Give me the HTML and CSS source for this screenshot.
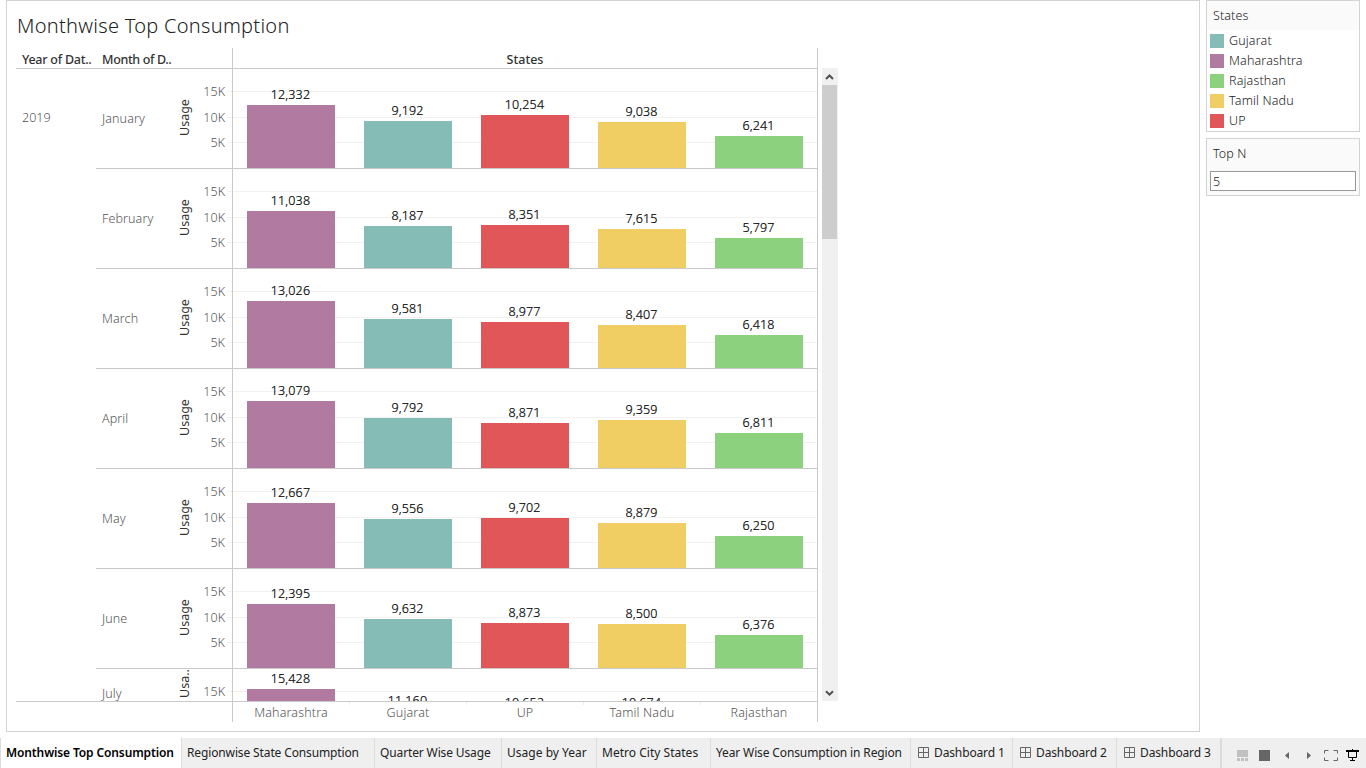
FILE: index.html
```html
<!DOCTYPE html>
<html lang="en">
<head>
<meta charset="utf-8">
<title>Monthwise Top Consumption</title>
<link rel="stylesheet" href="styles.css">
</head>
<body>
<main class="workspace">
  <section class="viz">
    <h1 class="viz-title">Monthwise Top Consumption</h1>
    <div class="viz-body">
      <div class="table">
        <div class="head">
          <div class="head-year">Year of Dat..</div>
          <div class="head-month">Month of D..</div>
          <div class="head-states">States</div>
        </div>
        <div class="body">
          <div class="year">2019</div>
          <div class="rows" id="rows"></div>
        </div>
        <div class="foot">
          <div class="foot-pad"></div>
          <div class="cats">
            <span>Maharashtra</span><span>Gujarat</span><span>UP</span><span>Tamil Nadu</span><span>Rajasthan</span>
          </div>
        </div>
      </div>
      <div class="scrollbar">
        <svg class="arrow" width="16" height="16" viewBox="0 0 16 16"><path d="M4 11 7.500 7.500 11 11" fill="none" stroke="#505050" stroke-width="2"/></svg>
        <div class="thumb"></div>
        <svg class="arrow" width="16" height="16" viewBox="0 0 16 16"><path d="M4 6.200 7.500 9.700 11 6.200" fill="none" stroke="#505050" stroke-width="2"/></svg>
      </div>
    </div>
  </section>
  <aside class="side">
    <section class="card legend">
      <h2>States</h2>
      <ul>
        <li><i class="c-gujarat"></i>Gujarat</li>
        <li><i class="c-maharashtra"></i>Maharashtra</li>
        <li><i class="c-rajasthan"></i>Rajasthan</li>
        <li><i class="c-tamil"></i>Tamil Nadu</li>
        <li><i class="c-up"></i>UP</li>
      </ul>
    </section>
    <section class="card param">
      <h2>Top N</h2>
      <div class="field">5</div>
    </section>
  </aside>
</main>
<nav class="tabs">
  <div class="tab t1 active"><span>Monthwise Top Consumption</span></div>
  <div class="tab t2"><span>Regionwise State Consumption</span></div>
  <div class="tab t3"><span>Quarter Wise Usage</span></div>
  <div class="tab t4"><span>Usage by Year</span></div>
  <div class="tab t5"><span>Metro City States</span></div>
  <div class="tab t6"><span>Year Wise Consumption in Region</span></div>
  <div class="tab t7 dash"><svg width="11" height="11" viewBox="0 0 11 11"><path d="M.5.5h10v10H.5zM5.5.5v10M.5 5.5h10"/></svg><span>Dashboard 1</span></div>
  <div class="tab t8 dash"><svg width="11" height="11" viewBox="0 0 11 11"><path d="M.5.5h10v10H.5zM5.5.5v10M.5 5.5h10"/></svg><span>Dashboard 2</span></div>
  <div class="tab t9 dash"><svg width="11" height="11" viewBox="0 0 11 11"><path d="M.5.5h10v10H.5zM5.5.5v10M.5 5.5h10"/></svg><span>Dashboard 3</span></div>
  <svg class="tools" width="144" height="30" viewBox="0 0 144 30">
    <path fill="#c1c1c1" d="M15 12h11v7H15zM15 20h3v3h-3zM19 20h3v3h-3zM23 20h3v3h-3z"/>
    <rect x="37" y="12" width="11" height="11" fill="#666"/>
    <path fill="#666" d="M67 14v7l-4-3.500zM85 14v7l4-3.500z"/>
    <path fill="none" stroke="#666" d="M102.500 15.500v-3h4M111.500 12.500h4v3M115.500 19.500v3h-4M106.500 22.500h-4v-3"/>
    <path fill="none" stroke="#000" d="M126.500 13v6.500h8V13M130.500 11v1M130.500 20v2M128 22.500h5"/>
    <path fill="#000" d="M124 12h13v2h-13z"/>
  </svg>
</nav>
<script src="chart.js"></script>
</body>
</html>
```
FILE: styles.css
```css
* { box-sizing: border-box; }
body {
  margin: 0; width: 1366px; height: 768px; overflow: hidden;
  display: flex; flex-direction: column; background: #fff;
  font-family: "Noto Sans", sans-serif; font-size: 12.5px; line-height: 16px; color: #222;
  font-weight: 300;
}
h1, h2, ul { margin: 0; padding: 0; font-weight: 300; }
.workspace { display: flex; height: 732px; padding-left: 6px; gap: 6px; }
.viz { width: 1194px; border: 1px solid #d3d3d3; padding-left: 9px; }
.viz-title { height: 47px; padding: 12px 0 0 1px; font-size: 20px; line-height: 25px; color: #222; letter-spacing: .28px; }
.viz-body { display: flex; gap: 4px; }
.table { width: 802px; }
.head { display: flex; height: 21px; border-bottom: 1px solid #c9c9c9; font-weight: 500; color: #333; line-height: 23px; letter-spacing: -.25px; }
.head-year { width: 80px; padding-left: 6px; }
.head-month { width: 136px; padding-left: 6px; letter-spacing: -.35px; }
.head-states { width: 586px; border-left: 1px solid #c9c9c9; border-right: 1px solid #c9c9c9; text-align: center; letter-spacing: 0; }
.body { display: flex; height: 632px; overflow: hidden; }
.year { width: 80px; padding: 41px 0 0 6px; color: #555; }
.rows { width: 722px; }
.row { display: flex; height: 100px; border-bottom: 1px solid #c9c9c9; }
.month { width: 80px; padding-left: 6px; line-height: 99px; color: #555; letter-spacing: .1px; }
.measure { width: 18px; height: 98px; writing-mode: vertical-rl; transform: rotate(180deg); text-align: center; line-height: 18px; font-weight: 400; color: #333; }
.axis { width: 31px; padding-top: 15px; text-align: right; color: #555; }
.axis span { display: block; height: 25.500px; }
.ticks { width: 7px; padding-left: 2px; }
.grid { background: linear-gradient(#f1f1f1, #f1f1f1) 0 22px / 100% 1px no-repeat, linear-gradient(#f1f1f1, #f1f1f1) 0 48px / 100% 1px no-repeat, linear-gradient(#f1f1f1, #f1f1f1) 0 73px / 100% 1px no-repeat; }
.ticks .grid { height: 99px; }
.plot { display: flex; width: 586px; height: 100px; border-left: 1px solid #c9c9c9; border-right: 1px solid #c9c9c9; padding-bottom: 1px; }
.cell { width: 117px; flex: none; display: flex; flex-direction: column; justify-content: flex-end; align-items: center; color: #000; line-height: 16px; letter-spacing: .15px; }
.cell:last-child { width: 116px; padding-left: 1px; }
.bar { width: 88px; margin-right: 1px; margin-top: 2px; flex: none; }
.cell .val { margin-right: 2px; -webkit-text-stroke: .2px #000; }
.row.partial .month { line-height: 49px; }
.row.partial .measure { height: 30px; }
.c-gujarat { background: #86bcb6; }
.c-maharashtra { background: #b07aa1; }
.c-rajasthan { background: #8cd17d; }
.c-tamil { background: #f1ce63; }
.c-up { background: #e15759; }
.foot { display: flex; height: 21px; border-top: 1px solid #c9c9c9; color: #555; }
.foot-pad { width: 216px; }
.cats { display: flex; width: 586px; border-left: 1px solid #c9c9c9; border-right: 1px solid #c9c9c9; letter-spacing: .15px; }
.cats span { width: 117px; flex: none; text-align: center; padding-right: 1px; line-height: 22px; background: linear-gradient(#eee, #eee) 100% 0 / 1px 3px no-repeat; }
.cats span:last-child { background: none; width: 116px; padding: 0; }
.scrollbar { width: 16px; height: 633px; margin-top: 20px; background: #f0f0f0; display: flex; flex-direction: column; }
.arrow { flex: none; }
.thumb { width: 15px; height: 154px; background: #cdcdcd; margin: 1px 0 auto; flex: none; }
.side { width: 154px; display: flex; flex-direction: column; gap: 6px; }
.card { border: 1px solid #d3d3d3; }
.card h2 { background: #fafafa; font-size: 12.5px; line-height: 30px; height: 29px; padding-left: 6px; color: #222; letter-spacing: .1px; }
.legend { height: 132px; }
.legend ul { list-style: none; padding: 1px 0 0 3px; letter-spacing: .15px; }
.legend li { display: flex; align-items: center; height: 20px; gap: 5px; }
.legend i { width: 14px; height: 14px; }
.param { height: 58px; background: #fafafa; padding: 0 3px; }
.card.param h2 { padding-left: 3px; height: 32px; line-height: 30px; }
.field { height: 20px; border: 1px solid #999; background: #fff; padding-left: 2px; line-height: 19px; }
.tabs { display: flex; height: 30px; margin-top: 6px; background: #efefef; color: #222; font-size: 12px; font-weight: 400; letter-spacing: -.13px; border-left: 1px solid #dcdcdc; }
.tab { border-right: 1px solid #dcdcdc; padding-left: 5px; line-height: 29px; white-space: nowrap; flex: none; }
.tab.active { background: #fff; font-weight: 600; color: #000; letter-spacing: -.12px; }
.t4, .t5 { letter-spacing: .02px; }
.dash { display: flex; align-items: flex-start; gap: 5px; padding-left: 7px; }
.dash svg { fill: none; stroke: #666; margin-top: 9px; }
.t1 { width: 181px; } .t2 { width: 193px; } .t3 { width: 127px; } .t4 { width: 95px; } .t5 { width: 114px; }
.t6 { width: 200px; } .t7 { width: 102px; } .t8 { width: 104px; }
.t9 { width: 105px; border-right-width: 2px; }
.tools { flex: none; }
```
FILE: chart.js
```js
const states = ["maharashtra", "gujarat", "up", "tamil", "rajasthan"];
const usage = [
  ["January", [12332, 9192, 10254, 9038, 6241]],
  ["February", [11038, 8187, 8351, 7615, 5797]],
  ["March", [13026, 9581, 8977, 8407, 6418]],
  ["April", [13079, 9792, 8871, 9359, 6811]],
  ["May", [12667, 9556, 9702, 8879, 6250]],
  ["June", [12395, 9632, 8873, 8500, 6376]],
  ["July", [15428, 11160, 10652, 10674, 0]]
];
document.getElementById("rows").innerHTML = usage.map(([month, values]) => {
  const partial = month === "July";
  const cells = values.map((v, i) => v
    ? `<div class="cell"><span class="val">${v.toLocaleString("en-US")}</span><div class="bar c-${states[i]}" style="height:${Math.round(v * 0.0051235)}px"></div></div>`
    : `<div class="cell"></div>`).join("");
  return `<div class="row${partial ? " partial" : ""}"><div class="month">${month}</div>
    <div class="measure">${partial ? "Usa.." : "Usage"}</div>
    <div class="axis"><span>15K</span><span>10K</span><span>5K</span></div>
    <div class="ticks"><div class="grid"></div></div>
    <div class="plot grid">${cells}</div></div>`;
}).join("");
```
